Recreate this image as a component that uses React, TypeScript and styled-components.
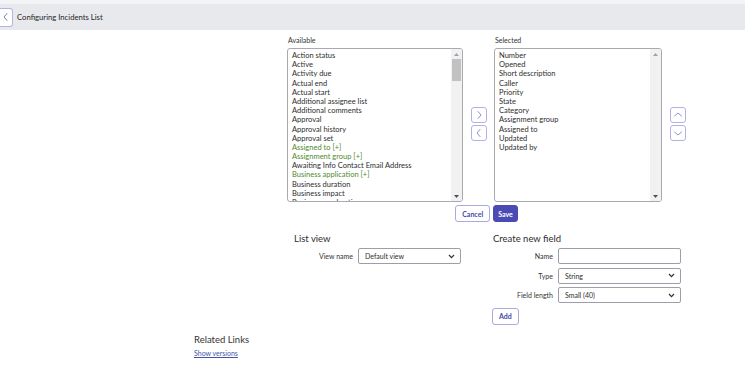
import React from "react";
import styled, { createGlobalStyle } from "styled-components";

const Global = createGlobalStyle`
  html, body { margin: 0; padding: 0; background: #fff; }
  body { font-family: Lato, "Open Sans", sans-serif; color: #2e2e2e; }
  * { box-sizing: border-box; }
`;

const Page = styled.div`
  width: 745px;
  height: 369px;
  overflow: hidden;
  display: flex;
  flex-direction: column;
`;

const TopStrip = styled.div`
  height: 4px;
  background: #f3f4f6;
`;

const Header = styled.div`
  height: 26px;
  background: #e8e9ed;
  display: flex;
  align-items: center;
  gap: 4px;
`;

const BackButton = styled.button`
  width: 13px;
  height: 19px;
  padding: 0;
  margin: 0;
  border: 1px solid #b3b3e6;
  border-left: none;
  border-radius: 0 3px 3px 0;
  background: #fff;
  display: flex;
  align-items: center;
  justify-content: center;
`;

const Title = styled.div`
  font-size: 7.7px;
  font-weight: 400;
  color: #1f1f1f;
`;

const Bucket = styled.div`
  display: flex;
  flex-direction: column;
  align-items: center;
  width: 399px;
  margin: 6px 0 0 287px;
`;

const BucketRow = styled.div`
  display: flex;
  align-items: flex-start;
  width: 100%;
`;

const Column = styled.div<{ $w: number }>`
  width: ${(p) => p.$w}px;
  display: flex;
  flex-direction: column;
`;

const Label = styled.div`
  font-size: 7px;
  color: #333;
  height: 12px;
  line-height: 9px;
  padding-left: 1px;
`;

const ListBox = styled.div`
  height: 154px;
  border: 1px solid #a9a9b2;
  border-radius: 3px;
  display: flex;
  overflow: hidden;
  background: #fff;
`;

const Items = styled.div`
  flex: 1;
  padding: 2px 0 0 4px;
  overflow: hidden;
`;

const Item = styled.div<{ $green?: boolean }>`
  font-size: 7.5px;
  line-height: 9.2px;
  height: 9.2px;
  white-space: nowrap;
  color: ${(p) => (p.$green ? "#4f8a2c" : "#2e2e2e")};
`;

const ScrollTrack = styled.div`
  width: 11px;
  background: #f1f1f1;
  display: flex;
  flex-direction: column;
  align-items: center;
  justify-content: space-between;
  position: relative;
`;

const ScrollArrow = styled.div`
  height: 10px;
  display: flex;
  align-items: center;
  justify-content: center;
`;

const Thumb = styled.div`
  position: absolute;
  top: 10px;
  left: 1px;
  width: 9px;
  height: 22px;
  background: #c1c1c1;
`;

const ButtonStack = styled.div<{ $ml: number; $mr: number }>`
  display: flex;
  flex-direction: column;
  gap: 2px;
  margin: 71px ${(p) => p.$mr}px 0 ${(p) => p.$ml}px;
`;

const IconButton = styled.button`
  width: 16px;
  height: 16px;
  padding: 0;
  border: 1px solid #b1b1e8;
  border-radius: 3px;
  background: #fff;
  display: flex;
  align-items: center;
  justify-content: center;
`;

const ActionRow = styled.div`
  display: flex;
  gap: 3px;
  margin-top: 3px;
`;

const Btn = styled.button<{ $primary?: boolean }>`
  height: 17px;
  padding: 0 ${(p) => (p.$primary ? 4 : 6)}px;
  font-family: Lato, sans-serif;
  font-size: 7px;
  font-weight: 700;
  border-radius: 3px;
  border: 1px solid ${(p) => (p.$primary ? "#4a4ab4" : "#a9a9e3")};
  background: ${(p) => (p.$primary ? "#4b4bb6" : "#fff")};
  color: ${(p) => (p.$primary ? "#fff" : "#4646a8")};
`;

const Lower = styled.div`
  display: grid;
  grid-template-columns: 200px 200px;
  margin: 11px 0 0 287px;
`;

const Section = styled.div<{ $pl: number }>`
  display: flex;
  flex-direction: column;
  padding-left: ${(p) => p.$pl}px;
`;

const SectionTitle = styled.div`
  font-size: 9.5px;
  color: #2e2e2e;
  height: 15px;
  line-height: 11px;
  padding-left: 1px;
`;

const FormRow = styled.div<{ $lw: number }>`
  display: grid;
  grid-template-columns: ${(p) => p.$lw}px 123px;
  column-gap: 5px;
  align-items: center;
  height: 16px;
  margin-bottom: 3.5px;
`;

const FieldLabel = styled.div`
  font-size: 7px;
  color: #333;
  text-align: right;
`;

const Field = styled.div<{ $w?: number }>`
  width: ${(p) => (p.$w ? `${p.$w}px` : "auto")};
  height: 16px;
  border: 1px solid #9e9ea8;
  border-radius: 2px;
  background: #fff;
  display: flex;
  align-items: center;
  justify-content: space-between;
  padding: 0 5px 0 6px;
  font-size: 7px;
  color: #2e2e2e;
`;

const AddRow = styled.div`
  display: flex;
  margin-top: 1px;
`;

const Related = styled.div`
  margin: 9px 0 0 194px;
  display: flex;
  flex-direction: column;
  align-items: flex-start;
`;

const RelatedTitle = styled.div`
  font-size: 9.5px;
  color: #333;
  line-height: 12px;
`;

const Link = styled.a`
  font-size: 7px;
  color: #3f56a6;
  text-decoration: underline;
  margin-top: 3px;
`;

const Chevron = ({ dir, size = 10, color = "#8e8ed8" }: { dir: "l" | "r" | "u" | "d"; size?: number; color?: string }) => {
  const d = {
    l: "M6 1.5 L3 5 L6 8.5",
    r: "M4 1.5 L7 5 L4 8.5",
    u: "M1.5 6 L5 3 L8.5 6",
    d: "M1.5 4 L5 7 L8.5 4",
  }[dir];
  return (
    <svg width={size} height={size} viewBox="0 0 10 10">
      <path d={d} fill="none" stroke={color} strokeWidth="1" strokeLinecap="round" strokeLinejoin="round" />
    </svg>
  );
};

const Caret = () => (
  <svg width="7" height="5" viewBox="0 0 7 5">
    <path d="M1 1 L3.5 3.6 L6 1" fill="none" stroke="#333" strokeWidth="1.2" />
  </svg>
);

const Tri = ({ up }: { up?: boolean }) => (
  <svg width="5" height="3" viewBox="0 0 5 3">
    <path d={up ? "M0 3 L2.5 0 L5 3 Z" : "M0 0 L2.5 3 L5 0 Z"} fill={up ? "#a3a3a3" : "#505050"} />
  </svg>
);

const available: [string, boolean?][] = [
  ["Action status"],
  ["Active"],
  ["Activity due"],
  ["Actual end"],
  ["Actual start"],
  ["Additional assignee list"],
  ["Additional comments"],
  ["Approval"],
  ["Approval history"],
  ["Approval set"],
  ["Assigned to [+]", true],
  ["Assignment group [+]", true],
  ["Awaiting Info Contact Email Address"],
  ["Business application [+]", true],
  ["Business duration"],
  ["Business impact"],
  ["Business resolve time"],
];

const selected = [
  "Number",
  "Opened",
  "Short description",
  "Caller",
  "Priority",
  "State",
  "Category",
  "Assignment group",
  "Assigned to",
  "Updated",
  "Updated by",
];

export default function App() {
  return (
    <Page>
      <Global />
      <TopStrip />
      <Header>
        <BackButton aria-label="Back">
          <Chevron dir="l" size={10} color="#7a7ad0" />
        </BackButton>
        <Title>Configuring Incidents List</Title>
      </Header>

      <Bucket>
        <BucketRow>
          <Column $w={176}>
            <Label>Available</Label>
            <ListBox>
              <Items>
                {available.map(([t, g]) => (
                  <Item key={t} $green={g}>
                    {t}
                  </Item>
                ))}
              </Items>
              <ScrollTrack>
                <ScrollArrow>
                  <Tri up />
                </ScrollArrow>
                <Thumb />
                <ScrollArrow>
                  <Tri />
                </ScrollArrow>
              </ScrollTrack>
            </ListBox>
          </Column>
          <ButtonStack $ml={8} $mr={7}>
            <IconButton aria-label="Add">
              <Chevron dir="r" />
            </IconButton>
            <IconButton aria-label="Remove">
              <Chevron dir="l" />
            </IconButton>
          </ButtonStack>
          <Column $w={168}>
            <Label>Selected</Label>
            <ListBox>
              <Items>
                {selected.map((t) => (
                  <Item key={t}>{t}</Item>
                ))}
              </Items>
              <ScrollTrack>
                <ScrollArrow>
                  <Tri up />
                </ScrollArrow>
                <ScrollArrow>
                  <Tri up={false} />
                </ScrollArrow>
              </ScrollTrack>
            </ListBox>
          </Column>
          <ButtonStack $ml={8} $mr={0}>
            <IconButton aria-label="Move up">
              <Chevron dir="u" />
            </IconButton>
            <IconButton aria-label="Move down">
              <Chevron dir="d" />
            </IconButton>
          </ButtonStack>
        </BucketRow>
        <ActionRow>
          <Btn>Cancel</Btn>
          <Btn $primary>Save</Btn>
        </ActionRow>
      </Bucket>

      <Lower>
        <Section $pl={6}>
          <SectionTitle>List view</SectionTitle>
          <FormRow $lw={60}>
            <FieldLabel>View name</FieldLabel>
            <Field $w={103}>
              Default view <Caret />
            </Field>
          </FormRow>
        </Section>
        <Section $pl={5}>
          <SectionTitle>Create new field</SectionTitle>
          <FormRow $lw={61}>
            <FieldLabel>Name</FieldLabel>
            <Field />
          </FormRow>
          <FormRow $lw={61}>
            <FieldLabel>Type</FieldLabel>
            <Field>
              String <Caret />
            </Field>
          </FormRow>
          <FormRow $lw={61}>
            <FieldLabel>Field length</FieldLabel>
            <Field>
              Small (40) <Caret />
            </Field>
          </FormRow>
          <AddRow>
            <Btn>Add</Btn>
          </AddRow>
        </Section>
      </Lower>

      <Related>
        <RelatedTitle>Related Links</RelatedTitle>
        <Link href="#">Show versions</Link>
      </Related>
    </Page>
  );
}
